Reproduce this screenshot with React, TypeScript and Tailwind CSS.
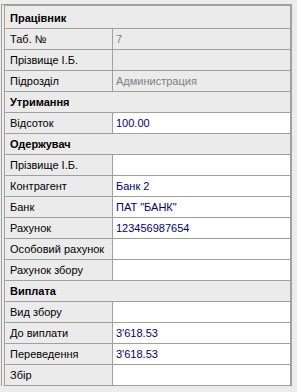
type Row =
  | { kind: 'head'; text: string }
  | { kind: 'field'; label: string; value?: string; readOnly?: boolean };

const rows: Row[] = [
  { kind: 'head', text: 'Працівник' },
  { kind: 'field', label: 'Таб. №', value: '7', readOnly: true },
  { kind: 'field', label: 'Прізвище І.Б.', readOnly: true },
  { kind: 'field', label: 'Підрозділ', value: 'Администрация', readOnly: true },
  { kind: 'head', text: 'Утримання' },
  { kind: 'field', label: 'Відсоток', value: '100.00' },
  { kind: 'head', text: 'Одержувач' },
  { kind: 'field', label: 'Прізвище І.Б.' },
  { kind: 'field', label: 'Контрагент', value: 'Банк 2' },
  { kind: 'field', label: 'Банк', value: 'ПАТ "БАНК"' },
  { kind: 'field', label: 'Рахунок', value: '123456987654' },
  { kind: 'field', label: 'Особовий рахунок' },
  { kind: 'field', label: 'Рахунок збору' },
  { kind: 'head', text: 'Виплата' },
  { kind: 'field', label: 'Вид збору' },
  { kind: 'field', label: 'До виплати', value: "3'618.53" },
  { kind: 'field', label: 'Переведення', value: "3'618.53" },
  { kind: 'field', label: 'Збір' },
];

export default function App() {
  return (
    <div
      className="h-[392px] w-[297px] overflow-hidden bg-[#ececec] pl-[1px] pt-[4px] text-[11px] leading-none text-black"
      style={{ fontFamily: 'Tahoma, "Liberation Sans", "DejaVu Sans", sans-serif' }}
    >
      <div className="w-[291px] border-l border-r-2 border-t border-[#a0a0a0] bg-[#ececec]">
        <div className="ml-[2px] border-l border-t border-[#a0a0a0] pt-[2px]">
          {rows.map((row, i) =>
            row.kind === 'head' ? (
              <div
                key={i}
                className="flex h-[21px] items-center border-b border-[#a0a0a0] bg-[#ebebeb] pl-[5px] font-bold"
              >
                {row.text}
              </div>
            ) : (
              <div key={i} className="flex h-[21px] border-b border-[#a0a0a0]">
                <div className="flex w-[108px] shrink-0 items-center border-r border-[#a0a0a0] bg-[#ebebeb] pl-[5px]">
                  {row.label}
                </div>
                <div
                  className={
                    row.readOnly
                      ? 'flex flex-1 items-center bg-[#ebebeb] pl-[3px] text-[#808080]'
                      : 'flex flex-1 items-center bg-white pl-[3px] text-[#000080]'
                  }
                >
                  {row.value}
                </div>
              </div>
            ),
          )}
        </div>
      </div>
    </div>
  );
}
